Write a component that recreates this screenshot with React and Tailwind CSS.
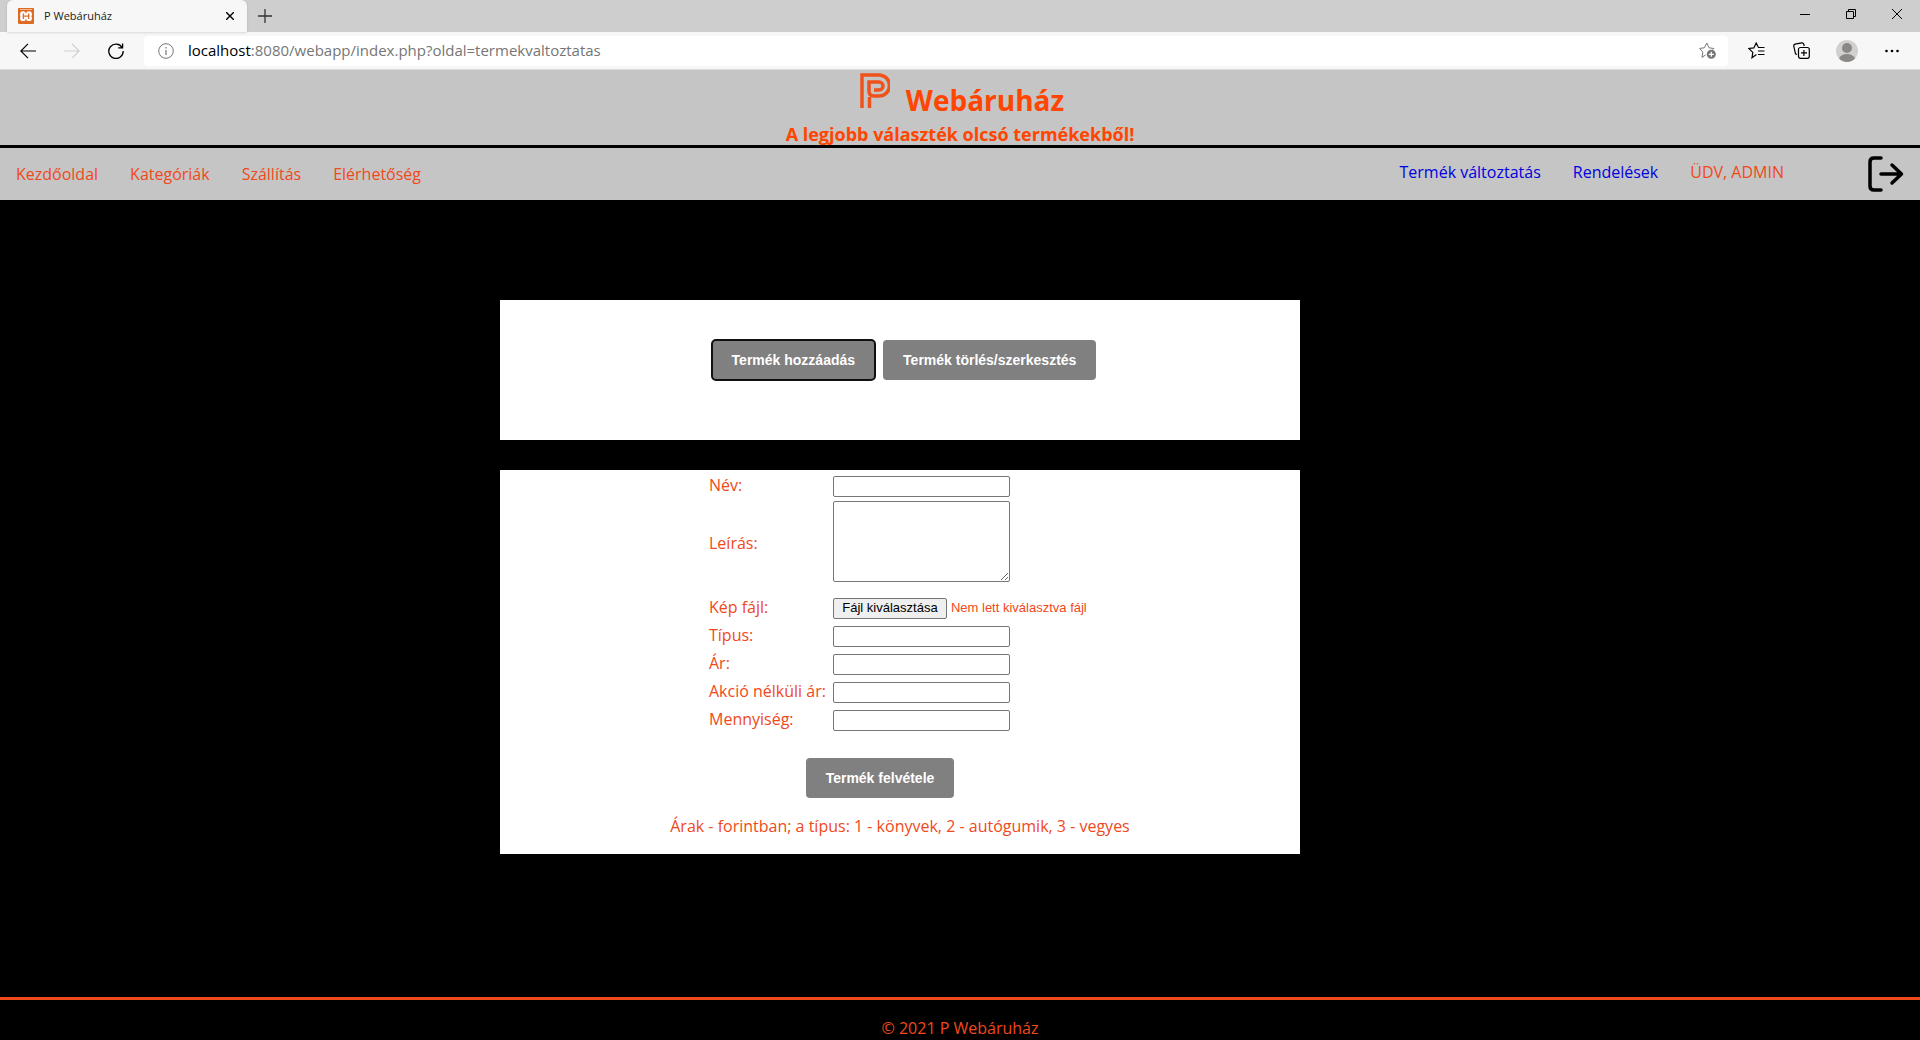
import React from "react";

function Svg({ size = "size-4", box = "0 0 16 16", children }) {
  return (
    <svg className={`${size} shrink-0`} viewBox={box} fill="none" stroke="currentColor" strokeWidth="1.2" aria-hidden="true">
      {children}
    </svg>
  );
}

function TabStrip() {
  return (
    <div className="flex h-8 items-stretch bg-[#cecece]">
      <div className="ml-[7px] flex w-60 items-center rounded-t-md bg-[#f7f7f7] pl-[11px] pr-2 shadow-sm">
        <svg className="size-4 shrink-0" viewBox="0 0 16 16" aria-hidden="true">
          <rect width="16" height="16" rx="1" fill="#dd6b24" />
          <path d="M2 1.5h12" stroke="#f3b98c" />
          <g fill="#fff">
            <circle cx="5" cy="6.200" r="2.900" />
            <circle cx="11" cy="6.200" r="2.900" />
            <circle cx="5" cy="10.200" r="2.900" />
            <circle cx="11" cy="10.200" r="2.900" />
            <path d="M3 7h10v2.400H3zM6 5.500h4v5.400H6z" />
          </g>
          <path d="M5.300 6v4.400M10.700 6v4.400M5.300 8.200h5.400" stroke="#dd6b24" strokeWidth="1.300" strokeLinecap="round" />
        </svg>
        <span className="ml-[10px] grow text-[11px] text-[#1a1a1a]">P Webáruház</span>
        <button type="button" aria-label="Lap bezárása" className="flex size-[18px] items-center justify-center text-black">
          <Svg size="size-2" box="0 0 8 8">
            <path d="M0 0l8 8M8 0L0 8" strokeWidth="1.4" />
          </Svg>
        </button>
      </div>
      <button type="button" aria-label="Új lap" className="ml-1 flex w-7 items-center justify-center text-[#333]">
        <Svg size="size-[14px]" box="0 0 14 14">
          <path d="M7 0v14M0 7h14" strokeWidth="1.3" />
        </Svg>
      </button>
      <div className="ml-auto flex text-black">
        <button type="button" aria-label="Kis méret" className="flex w-[46px] items-center justify-center pb-1">
          <Svg size="size-[10px]" box="0 0 10 10"><path d="M0 5.5h10" strokeWidth="1" /></Svg>
        </button>
        <button type="button" aria-label="Előző méret" className="flex w-[46px] items-center justify-center pb-1">
          <Svg size="size-[10px]" box="0 0 10 10"><path d="M.5 2.5h7v7h-7zM2.5 2.5v-2h7v7h-2" strokeWidth="1" /></Svg>
        </button>
        <button type="button" aria-label="Bezárás" className="flex w-[46px] items-center justify-center pb-1">
          <Svg size="size-[10px]" box="0 0 10 10"><path d="M0 0l10 10M10 0L0 10" strokeWidth="1" /></Svg>
        </button>
      </div>
    </div>
  );
}

function Toolbar() {
  return (
    <div className="flex h-[38px] items-center border-b border-[#dcdcdc] bg-[#f7f7f7] pr-[6px] text-black">
      <button type="button" aria-label="Vissza" className="ml-[6px] flex w-11 justify-center">
        <Svg><path d="M16 8H.8M8 .8L.8 8 8 15.2" /></Svg>
      </button>
      <button type="button" aria-label="Előre" disabled className="flex w-11 justify-center text-[#cfcfcf]">
        <Svg><path d="M0 8h15.2M8 .8L15.2 8 8 15.2" /></Svg>
      </button>
      <button type="button" aria-label="Frissítés" className="flex w-11 justify-center">
        <Svg><path d="M14.2 4.6A7.2 7.2 0 1 0 15.2 8M14.6.4v4.4h-4.4" strokeWidth="1.3" /></Svg>
      </button>
      <div className="ml-[6px] flex h-[30px] grow items-center rounded bg-white pl-[14px] pr-3 text-[#767676]">
        <Svg>
          <circle cx="8" cy="8" r="7.3" strokeWidth="1" />
          <path d="M8 7v5M8 4v1.4" strokeWidth="1.2" />
        </Svg>
        <div className="ml-[14px] grow text-[15px]">
          <span className="text-black">localhost</span>:8080/webapp/index.php?oldal=termekvaltoztatas
        </div>
        <button type="button" aria-label="Hozzáadás a kedvencekhez">
          <Svg size="size-[17px]" box="0 0 17 17">
            <path d="M6.5 13L3 15.4l.8-5.3L.7 6.4l4.6-.6L7.8 1l2.3 4.8 4.7.7-1 1.2" strokeWidth="1" />
            <circle cx="12.3" cy="12.3" r="4.5" fill="currentColor" stroke="none" />
            <path d="M12.3 9.8v5M9.8 12.3h5" stroke="#fff" />
          </Svg>
        </button>
      </div>
      <div className="ml-[6px] flex items-center">
        <button type="button" aria-label="Kedvencek" className="flex w-[45px] justify-center">
          <Svg size="size-[17px]" box="0 0 17 17">
            <path d="M8.4 12.6L4 15.8l.8-5.4L.8 6.5l5-.6L8.2 1l2 4M10 5.5h6.5M10 9h6.5M10 12.5h6.5" strokeWidth="1.2" />
          </Svg>
        </button>
        <button type="button" aria-label="Gyűjtemények" className="flex w-[45px] justify-center">
          <Svg size="size-[17px]" box="0 0 17 17">
            <rect x="5.5" y="5.5" width="10.8" height="10.8" rx="2" />
            <path d="M10.9 8v6M8 10.9h6M4 12.5L2.5 11.8 .8 4.3Q.6 2.6 2 2.2L8.8 .8q1.5-.2 2 1.4L11.2 4" />
          </Svg>
        </button>
        <button type="button" aria-label="Profil" className="flex w-[45px] justify-center">
          <svg className="size-[22px]" viewBox="0 0 22 22" aria-hidden="true">
            <circle cx="11" cy="11" r="11" fill="#d2d0ce" />
            <circle cx="11" cy="8" r="5" fill="#8a8886" />
            <path d="M3 18.5Q5 14 11 14t8 4.5A11 11 0 0 1 3 18.5z" fill="#8a8886" />
          </svg>
        </button>
        <button type="button" aria-label="Beállítások és egyebek" className="flex w-[45px] justify-center">
          <Svg>
            <g fill="currentColor" stroke="none">
              <circle cx="2.5" cy="8" r="1.3" /><circle cx="8" cy="8" r="1.3" /><circle cx="13.5" cy="8" r="1.3" />
            </g>
          </Svg>
        </button>
      </div>
    </div>
  );
}

const leftLinks = ["Kezdőoldal", "Kategóriák", "Szállítás", "Elérhetőség"];

function SiteHeader() {
  return (
    <>
      <header className="flex h-[75px] flex-col items-center bg-[#c5c5c5] font-bold text-[#ff4500]">
        <div className="flex h-[52px] items-start gap-4 pt-[3px] pl-1">
          <svg className="h-[35px] w-[30px]" viewBox="0 0 30 35" fill="none" stroke="#f0521c" strokeWidth="3.5" aria-hidden="true">
            <path d="M2 35V2h17a10.5 10.5 0 0 1 0 21h-5q-5 0-5-5V9h10a4 4 0 0 1 0 8h-5" />
            <path d="M9.5 24V35" />
          </svg>
          <h1 className="text-[28px] leading-[54px]">Webáruház</h1>
        </div>
        <p className="text-[18px] leading-6">A legjobb választék olcsó termékekből!</p>
      </header>
      <nav className="flex h-[55px] items-center border-t-[3px] border-black bg-[#c5c5c5] px-4">
        <ul className="flex gap-8">
          {leftLinks.map((t) => (
            <li key={t}><a href="#">{t}</a></li>
          ))}
        </ul>
        <div className="ml-auto flex items-center">
          <ul className="flex gap-8 pb-1">
            <li><a href="#" className="text-[#0000e0]">Termék változtatás</a></li>
            <li><a href="#" className="text-[#0000e0]">Rendelések</a></li>
            <li>ÜDV, ADMIN</li>
          </ul>
          <a href="#" aria-label="Kijelentkezés" className="ml-[84px] text-black">
            <svg className="size-9" viewBox="0 0 36 36" fill="none" stroke="currentColor" strokeWidth="3.5" strokeLinecap="round" strokeLinejoin="round" aria-hidden="true">
              <path d="M13 2H6Q2 2 2 6v24q0 4 4 4h7M13 18h20M24 9l9.5 9-9.5 9" />
            </svg>
          </a>
        </div>
      </nav>
    </>
  );
}

const buttonClass =
  "h-10 rounded bg-[#808080] px-5 font-['Liberation_Sans',Arial,sans-serif] text-[14px] font-bold text-white";
const fieldClass = "block w-[177px] rounded-[2px] border border-[#767676] bg-white";

function Row({ id, label, children }) {
  return (
    <tr className="h-7">
      <th scope="row" className="pr-[7px] pb-[2px] text-left font-normal whitespace-nowrap">
        <label htmlFor={id}>{label}</label>
      </th>
      <td>{children || <input id={id} type="text" className={`${fieldClass} h-[21px] px-1 text-[13px]`} />}</td>
    </tr>
  );
}

function ProductForm() {
  return (
    <form className="bg-white pt-[2px] pb-4" onSubmit={(e) => e.preventDefault()}>
      <table className="ml-[209px] border-collapse">
        <tbody>
          <Row id="nev" label="Név:" />
          <tr className="h-[94px]">
            <th scope="row" className="pb-2 text-left font-normal">
              <label htmlFor="leiras">Leírás:</label>
            </th>
            <td className="pt-px align-top">
              <textarea id="leiras" className={`${fieldClass} h-[81px]`} />
            </td>
          </tr>
          <Row id="kep" label="Kép fájl:">
            <div className="flex items-center gap-1 font-['Liberation_Sans',Arial,sans-serif] text-[13px]">
              <input id="kep" type="file" className="sr-only" />
              <label htmlFor="kep" className="flex h-[21px] w-[114px] items-center justify-center rounded-[2px] border border-[#767676] bg-[#efefef] whitespace-nowrap text-black">
                Fájl kiválasztása
              </label>
              <span className="whitespace-nowrap">Nem lett kiválasztva fájl</span>
            </div>
          </Row>
          <Row id="tipus" label="Típus:" />
          <Row id="ar" label="Ár:" />
          <Row id="akcio" label="Akció nélküli ár:" />
          <Row id="mennyiseg" label="Mennyiség:" />
        </tbody>
      </table>
      <div className="mt-6 flex justify-center pr-10">
        <button type="submit" className={buttonClass}>Termék felvétele</button>
      </div>
      <p className="mt-4 text-center">Árak - forintban; a típus: 1 - könyvek, 2 - autógumik, 3 - vegyes</p>
    </form>
  );
}

export default function App() {
  return (
    <div className="flex min-h-screen flex-col bg-black">
      <div className="font-['Segoe_UI','Open_Sans',sans-serif]">
        <TabStrip />
        <Toolbar />
      </div>
      <div className="flex grow flex-col font-['Comic_Sans_MS','Open_Sans',sans-serif] text-[16px] leading-6 text-[#f0491a]">
        <SiteHeader />
        <main className="grow pt-[100px] pr-[120px]">
          <div className="mx-auto flex w-full max-w-[800px] flex-col gap-[30px]">
            <section className="flex items-start justify-center gap-2 bg-white pt-10 pb-[60px] pl-2">
              <button type="button" className={`${buttonClass} outline-2 -outline-offset-1 outline-[#101010]`}>Termék hozzáadás</button>
              <button type="button" className={buttonClass}>Termék törlés/szerkesztés</button>
            </section>
            <ProductForm />
          </div>
        </main>
        <footer className="h-[43px] border-t-[3px] border-[#f0491a] pt-4 text-center">© 2021 P Webáruház</footer>
      </div>
    </div>
  );
}
